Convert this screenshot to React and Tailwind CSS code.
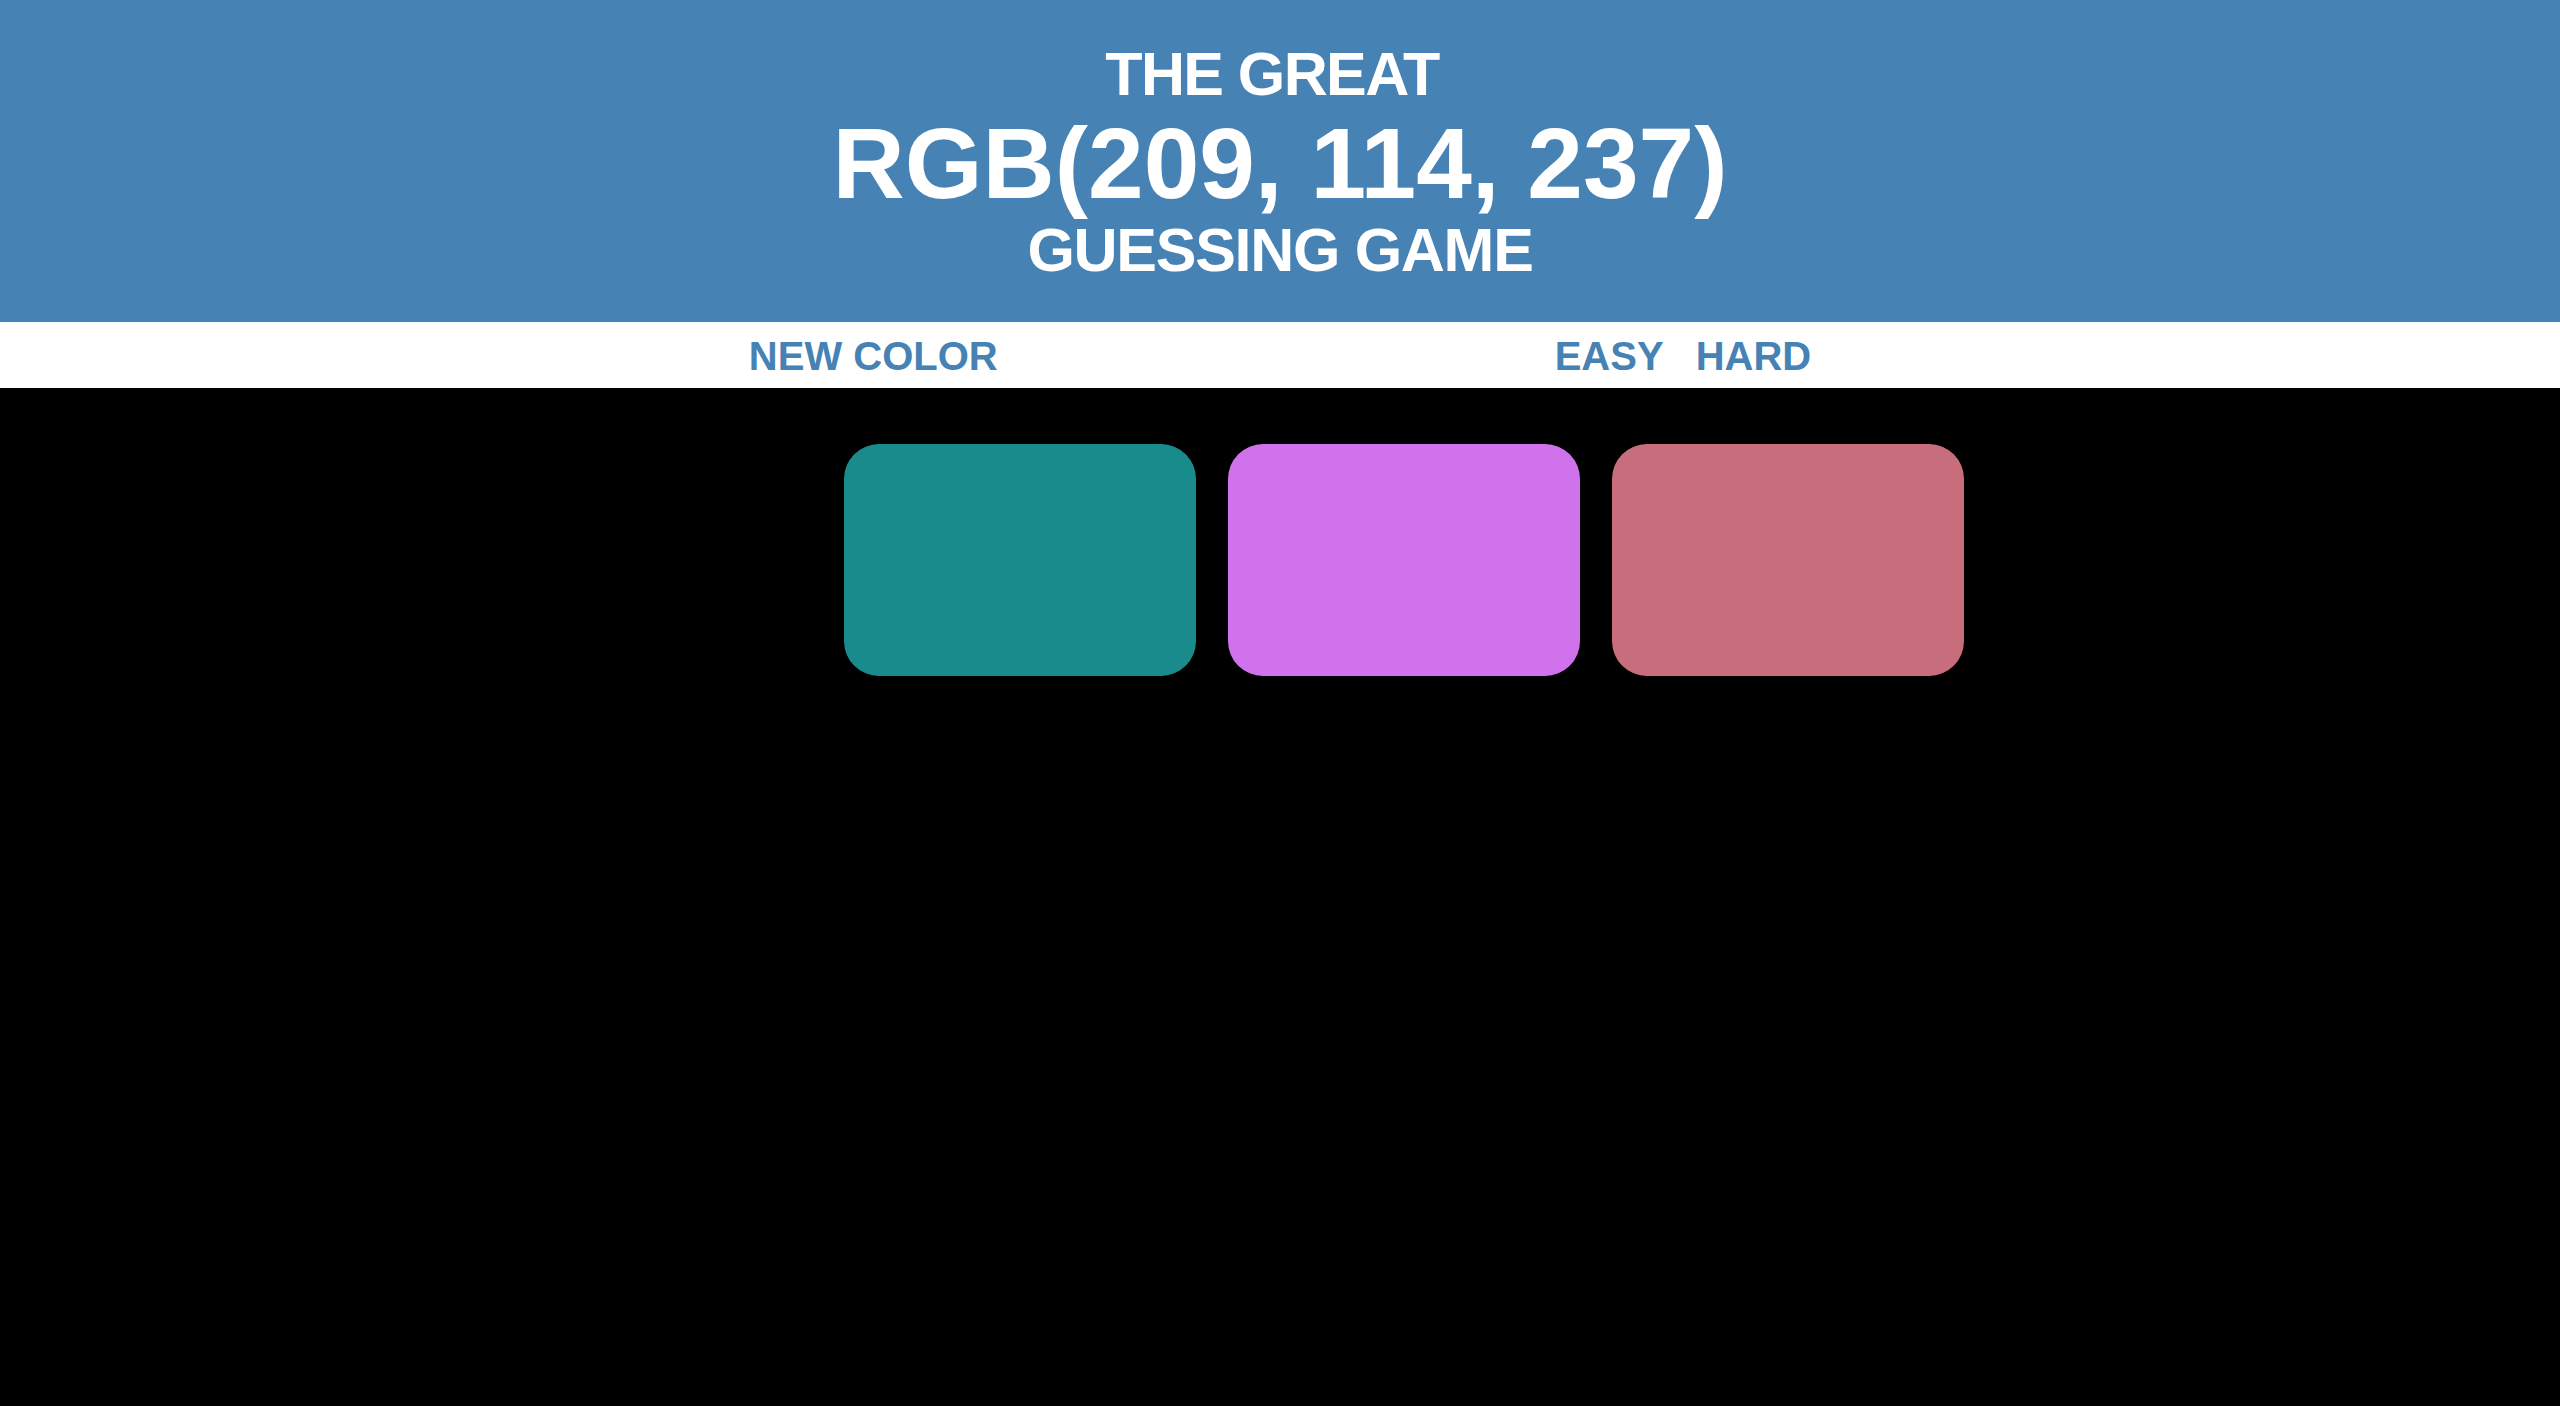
import React, { useState } from "react";

const Squares = [
  { color: "#1a8b8c" },
  { color: "#d172ed" },
  { color: "#c86d7b" },
];

export default function App() {
  const [mode, setMode] = useState("easy");

  return (
    <div className="min-h-screen w-full bg-black font-['Liberation_Sans',Arial,sans-serif] font-bold uppercase">
      <h1 className="bg-[#4682b4] text-white text-center pt-[44px] pb-[42px]">
        <span className="block pr-[16px] text-[61px] leading-[60px] tracking-[-1.6px]">The Great</span>
        <span className="block mt-[9px] text-[100px] leading-[100px]">RGB(209, 114, 237)</span>
        <span className="block mt-[7px] text-[61px] leading-[60px] tracking-[-1.3px]">Guessing Game</span>
      </h1>

      <div className="bg-white flex justify-center pt-[14px] pb-[12px] text-[#4682b4] text-[40px] leading-[40px]">
        <button className="uppercase">New Color</button>
        <span className="w-[557px]"></span>
        <div className="flex gap-[32px]">
          <button onClick={() => setMode("easy")} className="uppercase">Easy</button>
          <button onClick={() => setMode("hard")} className="uppercase">Hard</button>
        </div>
      </div>

      <div className="flex gap-[32px] pl-[844px] pt-[56px]">
        {Squares.map((sq, i) => (
          <div
            key={i}
            className="w-[352px] h-[232px] rounded-[35px] shrink-0"
            style={{ backgroundColor: sq.color }}
          ></div>
        ))}
      </div>
    </div>
  );
}
